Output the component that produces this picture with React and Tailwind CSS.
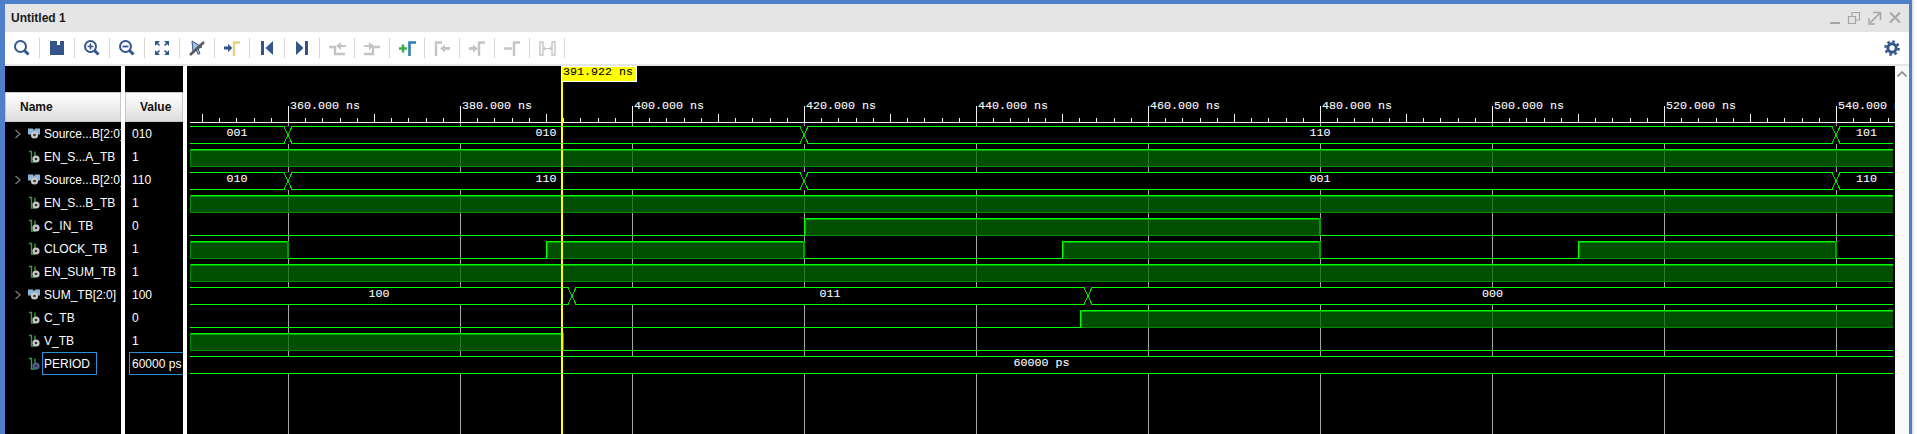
import React from 'react';

const NS = 8.6;
const X0 = 288; // x of 360 ns
const xAt = (t) => X0 + (t - 360) * NS;
const LEFT = 190;
const RIGHT = 1893;
const rowTop = (i) => 126 + 23 * i;
const MONO = '"Liberation Mono", monospace';

const SIGNALS = [
  { name: 'Source...B[2:0]', value: '010', bus: true },
  { name: 'EN_S...A_TB', value: '1' },
  { name: 'Source...B[2:0]', value: '110', bus: true },
  { name: 'EN_S...B_TB', value: '1' },
  { name: 'C_IN_TB', value: '0' },
  { name: 'CLOCK_TB', value: '1' },
  { name: 'EN_SUM_TB', value: '1' },
  { name: 'SUM_TB[2:0]', value: '100', bus: true },
  { name: 'C_TB', value: '0' },
  { name: 'V_TB', value: '1' },
  { name: 'PERIOD', value: '60000 ps', selected: true },
];

// [x start, x end, level]
const BITS = {
  1: [[LEFT, RIGHT, 1]],
  3: [[LEFT, RIGHT, 1]],
  4: [[LEFT, 804, 0], [804, 1320, 1], [1320, RIGHT, 0]],
  5: [[LEFT, 288, 1], [288, 546, 0], [546, 804, 1], [804, 1062, 0], [1062, 1320, 1], [1320, 1578, 0], [1578, 1836, 1], [1836, RIGHT, 0]],
  6: [[LEFT, RIGHT, 1]],
  8: [[LEFT, 1080, 0], [1080, RIGHT, 1]],
  9: [[LEFT, 563, 1], [563, RIGHT, 0]],
};

// change points and labels
const BUSES = {
  0: { at: [288, 804, 1836], labels: ['001', '010', '110', '101'] },
  2: { at: [288, 804, 1836], labels: ['010', '110', '001', '110'] },
  7: { at: [572, 1088], labels: ['100', '011', '000'] },
  10: { at: [], labels: ['60000 ps'] },
};

const monoText = { fontSize: '11.67', fontFamily: MONO, strokeWidth: 0.08, shapeRendering: 'auto' };

function BusRow({ row, at, labels }) {
  const y = rowTop(row);
  const stops = [LEFT, ...at, RIGHT];
  return (
    <g>
      <rect x={LEFT} y={y} width={RIGHT - LEFT} height={18} fill="#000" />
      {labels.map((l, i) => {
        const a = i === 0 ? stops[i] : stops[i] + 4;
        const b = i === labels.length - 1 ? stops[i + 1] : stops[i + 1] - 4;
        return (
          <g key={i}>
            <rect x={a} y={y} width={b - a} height={1} fill="#00ff00" />
            <rect x={a} y={y + 17} width={b - a} height={1} fill="#00ff00" />
            <text x={(a + b) / 2} y={y + 10} textAnchor="middle" fill="#fff" stroke="#fff" {...monoText}>{l}</text>
          </g>
        );
      })}
      {at.map((x) => (
        <g key={x} stroke="#00e000" strokeWidth="1">
          <line x1={x - 4} y1={y + 0.5} x2={x + 4} y2={y + 17.5} />
          <line x1={x - 4} y1={y + 17.5} x2={x + 4} y2={y + 0.5} />
        </g>
      ))}
    </g>
  );
}

function BitRow({ row, parts }) {
  const y = rowTop(row);
  return (
    <g>
      {parts.map(([a, b, level], i) =>
        level ? (
          <g key={i}>
            <rect x={a + 1} y={y + 1} width={b - a - 1} height={17} fill="#006a00" opacity="0.75" />
            <rect x={a} y={y} width={b - a} height={1} fill="#00ff00" />
            <rect x={a} y={y + 1} width={b - a} height={1} fill="#00a000" />
            <rect x={a} y={y + 17} width={b - a} height={1} fill="#008a00" />
            <rect x={a} y={y} width={1} height={18} fill={i === 0 ? '#008a00' : '#00ff00'} />
            {i !== 0 && <rect x={a + 1} y={y} width={1} height={18} fill="#00a000" />}
            {b < RIGHT && <rect x={b - 1} y={y} width={2} height={18} fill="#00a000" />}
          </g>
        ) : (
          <rect key={i} x={a} y={y + 17} width={b - a} height={1} fill="#00ff00" />
        )
      )}
    </g>
  );
}

function Waves() {
  const minor = [];
  for (let t = 348; t <= 546; t += 2) minor.push(t);
  const major = [360, 380, 400, 420, 440, 460, 480, 500, 520, 540];
  return (
    <svg width="1708" height="368" viewBox="187 66 1708 368" shapeRendering="crispEdges" className="block shrink-0">
      <rect x="187" y="66" width="1708" height="368" fill="#000" />
      {/* grid */}
      {major.map((t) => (
        <rect key={t} x={xAt(t)} y="123" width="1" height="311" fill="#a8a8a8" />
      ))}
      {/* ruler */}
      <rect x={LEFT} y="122" width={RIGHT - LEFT + 2} height="1" fill="#f0f0f0" />
      {minor.map((t) => {
        const x = xAt(t);
        if (x < LEFT || x > RIGHT) return null;
        const h = t % 20 === 0 ? 16 : t % 10 === 0 ? 8 : 4;
        return <rect key={t} x={Math.round(x)} y={122 - h} width="1" height={h} fill="#f0f0f0" />;
      })}
      {major.map((t) => (
        <text key={t} x={xAt(t) + 2} y="109" fill="#fff" stroke="#fff" {...monoText}>{t}.000 ns</text>
      ))}
      {Object.entries(BITS).map(([r, parts]) => <BitRow key={r} row={Number(r)} parts={parts} />)}
      {Object.entries(BUSES).map(([r, b]) => <BusRow key={r} row={Number(r)} at={b.at} labels={b.labels} />)}
      {/* cursor */}
      <rect x="561" y="80" width="2" height="354" fill="#ffff00" />
      <rect x="561" y="66" width="75" height="15" fill="#ffff00" stroke="#fff" strokeWidth="1" />
      <text x="563" y="75" fill="#000" stroke="#000" {...monoText}>391.922 ns</text>
    </svg>
  );
}

const BLUE = '#33558c';
const GRAY = '#c4c4c4';

const Svg = ({ children }) => (
  <svg width="24" height="24" viewBox="0 0 24 24" fill="none">{children}</svg>
);

const Lens = ({ children }) => (
  <Svg>
    <circle cx="10.5" cy="10.5" r="5.5" stroke={BLUE} strokeWidth="2" />
    <path d="M14.5 14.5 L18.5 18.5" stroke={BLUE} strokeWidth="3" />
    {children}
  </Svg>
);

const Flag = ({ color, x = 14 }) => (
  <path d={`M${x} 20 V6.5 H${x + 6}`} stroke={color} strokeWidth="2.4" />
);

const ICONS = [
  <Lens key="s" />,
  <Svg key="d"><path d="M5 5h14v14H5z" fill={BLUE} /><path d="M12 5h3v4h-3z" fill="#fff" /></Svg>,
  <Lens key="zi"><path d="M7.5 10.5h6M10.5 7.5v6" stroke={BLUE} strokeWidth="1.6" /></Lens>,
  <Lens key="zo"><path d="M7.5 10.5h6" stroke={BLUE} strokeWidth="1.8" /></Lens>,
  <Svg key="f">
    <path d="M5 5h5L5 10zM19 5h-5l5 5zM5 19h5l-5-5zM19 19h-5l5-5z" fill={BLUE} />
    <path d="M6 6l3.5 3.5M18 6l-3.5 3.5M6 18l3.5-3.5M18 18l-3.5-3.5" stroke={BLUE} strokeWidth="1.6" />
  </Svg>,
  <Svg key="c">
    <path d="M7 5l10 6-4 1.5 2 5-2 .8-2-5L8 16z" fill="#a9bdd9" stroke={BLUE} strokeWidth="1" />
    <path d="M5 19L19 6" stroke="#5a5a5a" strokeWidth="2.6" />
  </Svg>,
  <Svg key="m">
    <path d="M4 10.5h4V8l4.5 4L8 16v-2.5H4z" fill={BLUE} />
    <Flag color="#e6d183" />
  </Svg>,
  <Svg key="p"><path d="M6 5h3v14H6zM18 5v14l-7.5-7z" fill={BLUE} /></Svg>,
  <Svg key="n"><path d="M6 5v14l7.5-7zM15 5h3v14h-3z" fill={BLUE} /></Svg>,
  <Svg key="ge">
    <path d="M4 11h6v7h10" stroke={GRAY} strokeWidth="2.4" />
    <path d="M21 9h-5V6l-5 4 5 4v-3h5z" fill={GRAY} />
  </Svg>,
  <Svg key="gn">
    <path d="M4 18h9v-7h7" stroke={GRAY} strokeWidth="2.4" />
    <path d="M4 9h5V6l5 4-5 4v-3H4z" fill={GRAY} />
  </Svg>,
  <Svg key="add">
    <path d="M4 12.5h8M8 8.5v8" stroke="#3fae49" strokeWidth="2.6" />
    <path d="M14.5 20V6.5H21" stroke="#2f7fb5" strokeWidth="2.6" />
  </Svg>,
  <Svg key="gl">
    <path d="M6 20V6.5h6" stroke={GRAY} strokeWidth="2.4" />
    <path d="M20 11h-5V8.5l-5 4 5 4V14h5z" fill={GRAY} />
  </Svg>,
  <Svg key="gr">
    <path d="M4 11h4V8.5l5 4-5 4V14H4z" fill={GRAY} />
    <Flag color={GRAY} />
  </Svg>,
  <Svg key="gm">
    <path d="M4 12.5h8" stroke={GRAY} strokeWidth="2.4" />
    <Flag color={GRAY} />
  </Svg>,
  <Svg key="gb">
    <path d="M5 6h3v13H5zM17 6h3v13h-3z" fill="none" stroke={GRAY} strokeWidth="1.4" />
    <path d="M9 12.5h7M10.5 10.5l-2 2 2 2M14.5 10.5l2 2-2 2" stroke={GRAY} strokeWidth="1" />
  </Svg>,
];

function Toolbar() {
  return (
    <div className="flex h-[32px] items-center bg-white">
      {ICONS.map((icon, i) => (
        <React.Fragment key={i}>
          <div className="flex w-[34px] items-center justify-center">{icon}</div>
          <div className="h-[20px] w-px bg-[#d8d8d8]" />
        </React.Fragment>
      ))}
      <div className="ml-auto mr-[5px] flex w-[24px] items-center justify-center">
        <svg width="16" height="16" viewBox="0 0 16 16" fill="none">
          <circle cx="8" cy="8" r="4.2" stroke={BLUE} strokeWidth="3" />
          <circle cx="8" cy="8" r="6.6" stroke={BLUE} strokeWidth="2.4" strokeDasharray="2.6 2.6" />
        </svg>
      </div>
    </div>
  );
}

function WindowButtons() {
  return (
    <div className="ml-auto mr-[6px] flex items-center gap-[4px] text-[#a6a6a6]">
      <svg width="16" height="16" viewBox="0 0 16 16" fill="none" stroke="currentColor">
        <path d="M3 13h10" strokeWidth="2" />
      </svg>
      <svg width="16" height="16" viewBox="0 0 16 16" fill="none" stroke="currentColor" strokeWidth="1.2">
        <path d="M1.5 6.5h7v7h-7zM5 6V2.5h7.5V10H9" />
      </svg>
      <svg width="16" height="16" viewBox="0 0 16 16" fill="none" stroke="currentColor" strokeWidth="1.6">
        <path d="M6 2.5h7.5V10M13 3L3 13" />
        <path d="M2 8v6h6" strokeWidth="1.4" />
      </svg>
      <svg width="16" height="16" viewBox="0 0 16 16" fill="none" stroke="currentColor" strokeWidth="2">
        <path d="M3 2.5l10 10M13 2.5l-10 10" />
      </svg>
    </div>
  );
}

function SignalIcon({ bus, selected }) {
  const hub = selected ? '#4a5f8f' : '#c8c8c8';
  return (
    <svg width="14" height="14" viewBox="0 0 14 14" fill="none">
      {bus ? (
        <>
          <path d="M0 1.5h5l1 2 1-2h5v6H0z" fill="#8fb5d6" />
          <circle cx="6.5" cy="8" r="3.6" fill={hub} />
          <circle cx="6.5" cy="8" r="1.3" fill="#333" />
        </>
      ) : (
        <>
          <path d="M1 1.5h2.5V12H7V1.5" stroke="#3f9c3f" strokeWidth="1.4" />
          <circle cx="8" cy="9" r="3.6" fill={hub} />
          <circle cx="8" cy="9" r="1.3" fill="#333" />
        </>
      )}
    </svg>
  );
}

const HeaderCell = ({ children, className }) => (
  <div className={`flex h-[30px] items-center border border-[#c8c8c8] bg-gradient-to-b from-white to-[#dedede] text-[12px] font-bold text-[#111] ${className}`}>
    {children}
  </div>
);

function NameColumn() {
  return (
    <div className="w-[116px] shrink-0 overflow-hidden bg-black pt-[26px]">
      <HeaderCell className="pl-[14px]">Name</HeaderCell>
      {SIGNALS.map((s, i) => (
        <div key={i} className="flex h-[23px] items-center whitespace-nowrap pl-[9px] text-[12px] text-white">
          <div className="flex w-[14px] shrink-0 items-center">
            {s.bus && (
              <svg width="8" height="10" viewBox="0 0 8 10" fill="none">
                <path d="M1.5 1l4.5 4-4.5 4" stroke="#7a7a7a" strokeWidth="1.3" />
              </svg>
            )}
          </div>
          <div className="flex w-[16px] shrink-0 items-center"><SignalIcon bus={s.bus} selected={s.selected} /></div>
          {s.selected ? (
            <span className="-ml-[2px] flex h-[23px] w-[55px] items-center border border-[#2f8fd6] pl-[1px]">{s.name}</span>
          ) : (
            <span>{s.name}</span>
          )}
        </div>
      ))}
    </div>
  );
}

function ValueColumn() {
  return (
    <div className="w-[58px] shrink-0 overflow-hidden bg-black pt-[26px]">
      <HeaderCell className="pl-[14px]">Value</HeaderCell>
      {SIGNALS.map((s, i) => (
        <div key={i} className="flex h-[23px] items-center whitespace-nowrap text-[12px] text-white">
          {s.selected ? (
            <span className="ml-[4px] flex h-[23px] w-[70px] shrink-0 items-center border border-[#2f8fd6] pl-[2px]">{s.value}</span>
          ) : (
            <span className="pl-[7px]">{s.value}</span>
          )}
        </div>
      ))}
    </div>
  );
}

export default function App() {
  return (
    <div className="flex h-[434px] w-[1917px] overflow-hidden bg-white" style={{ fontFamily: '"Liberation Sans", Arial, sans-serif' }}>
      <div className="flex h-full w-[1912px] shrink-0 flex-col border-l-[5px] border-r-[3px] border-t-[4px] border-[#4f7ecb]">
        <div className="flex h-[28px] items-center bg-[#e5e5e5] pl-[6px] text-[12px] font-bold text-[#1a1a1a]">
          <span>Untitled 1</span>
          <WindowButtons />
        </div>
        <Toolbar />
        <div className="h-[2px] bg-[#e6e6e6]" />
        <div className="flex min-h-0 flex-1 bg-white">
          <NameColumn />
          <div className="w-[4px] shrink-0" />
          <ValueColumn />
          <div className="w-[4px] shrink-0" />
          <Waves />
          <div className="flex w-[14px] shrink-0 justify-center bg-[#fafafa] pt-[5px]">
            <svg width="10" height="6" viewBox="0 0 10 6" fill="none">
              <path d="M0.5 5.5L5 1l4.5 4.5" stroke="#8a8a8a" strokeWidth="1.6" />
            </svg>
          </div>
        </div>
      </div>
      <div className="w-[2px] shrink-0 bg-[#e4e4e4]" />
    </div>
  );
}
